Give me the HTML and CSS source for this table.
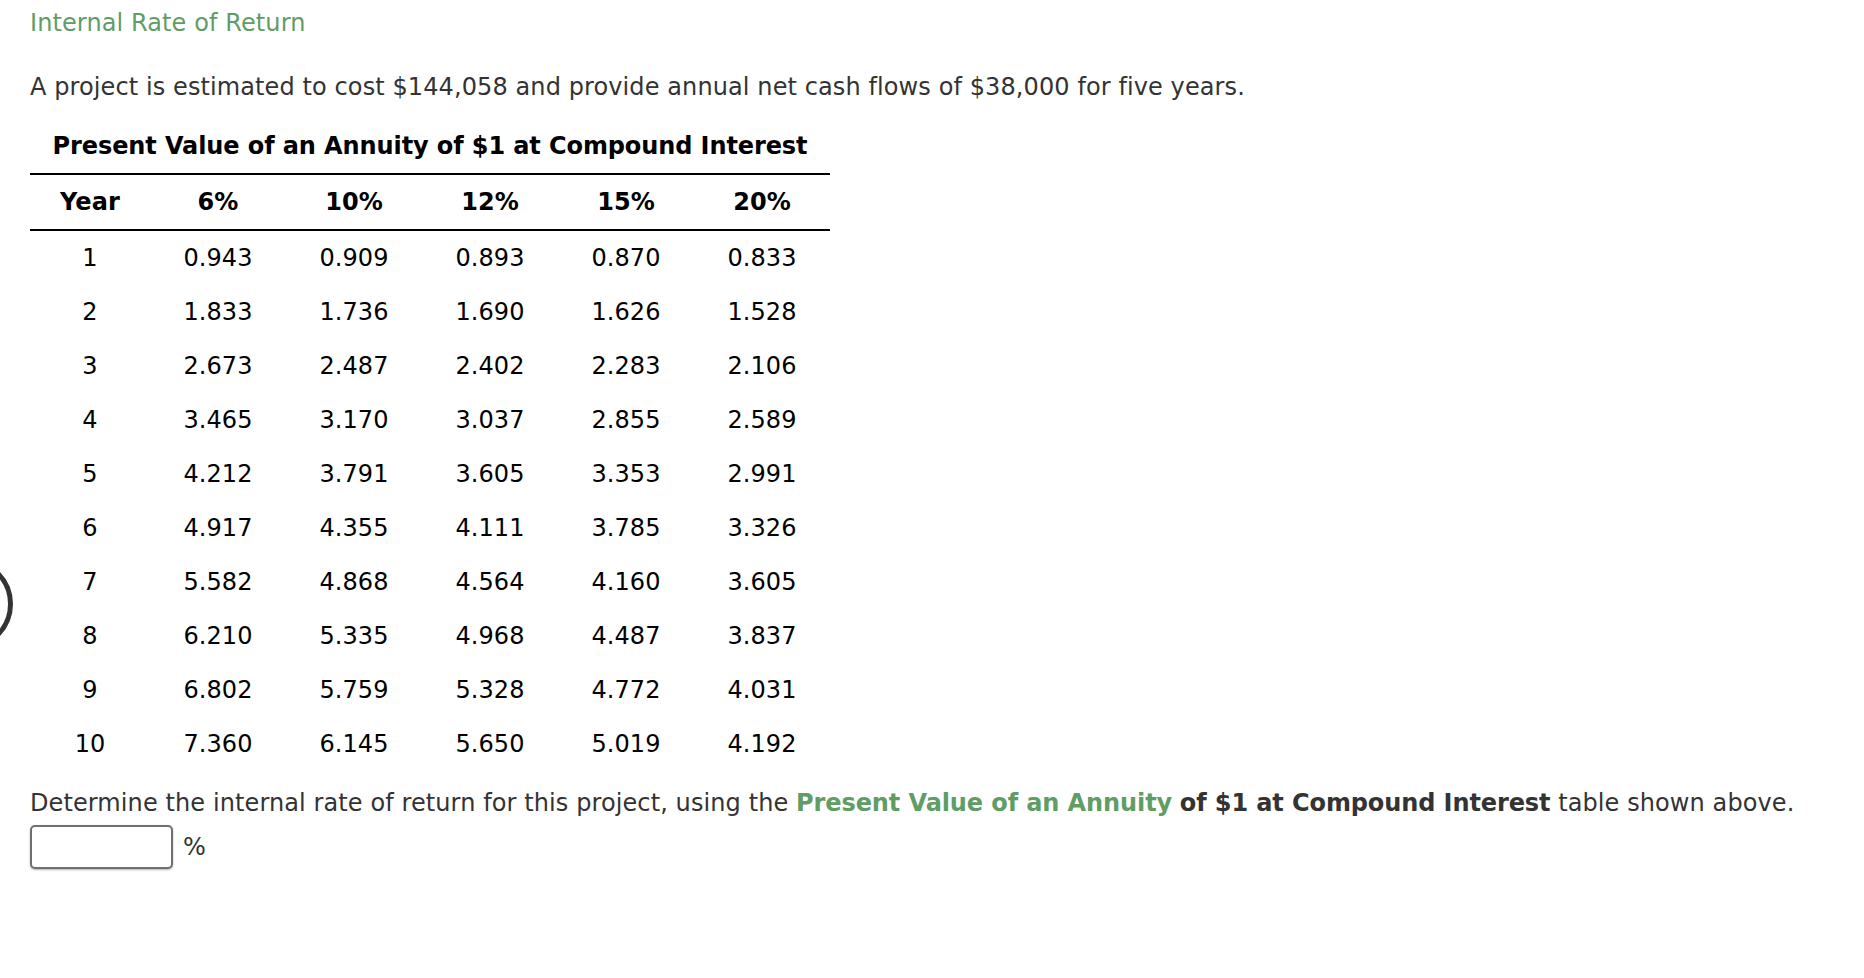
FILE: index.html
```html
<!DOCTYPE html>
<html>
<head>
<meta charset="utf-8">
<link rel="stylesheet" href="styles.css">
</head>
<body>
<div class="ring"></div>
<div class="page">
  <div class="title">Internal Rate of Return</div>
  <p class="intro">A project is estimated to cost $144,058 and provide annual net cash flows of $38,000 for five years.</p>
  <table class="pv">
    <caption>Present Value of an Annuity of $1 at Compound Interest</caption>
    <thead>
      <tr><th class="yr">Year</th><th>6%</th><th>10%</th><th>12%</th><th>15%</th><th>20%</th></tr>
    </thead>
    <tbody>
      <tr><td>1</td><td>0.943</td><td>0.909</td><td>0.893</td><td>0.870</td><td>0.833</td></tr>
      <tr><td>2</td><td>1.833</td><td>1.736</td><td>1.690</td><td>1.626</td><td>1.528</td></tr>
      <tr><td>3</td><td>2.673</td><td>2.487</td><td>2.402</td><td>2.283</td><td>2.106</td></tr>
      <tr><td>4</td><td>3.465</td><td>3.170</td><td>3.037</td><td>2.855</td><td>2.589</td></tr>
      <tr><td>5</td><td>4.212</td><td>3.791</td><td>3.605</td><td>3.353</td><td>2.991</td></tr>
      <tr><td>6</td><td>4.917</td><td>4.355</td><td>4.111</td><td>3.785</td><td>3.326</td></tr>
      <tr><td>7</td><td>5.582</td><td>4.868</td><td>4.564</td><td>4.160</td><td>3.605</td></tr>
      <tr><td>8</td><td>6.210</td><td>5.335</td><td>4.968</td><td>4.487</td><td>3.837</td></tr>
      <tr><td>9</td><td>6.802</td><td>5.759</td><td>5.328</td><td>4.772</td><td>4.031</td></tr>
      <tr><td>10</td><td>7.360</td><td>6.145</td><td>5.650</td><td>5.019</td><td>4.192</td></tr>
    </tbody>
  </table>
  <p class="question">Determine the internal rate of return for this project, using the <b class="green">Present Value of an Annuity</b> <b>of $1 at Compound Interest</b> table shown above.</p>
  <div class="answer">
    <input class="box" type="text">
    <span class="unit">%</span>
  </div>
</div>
</body>
</html>
```

FILE: styles.css
```css
html, body {
  margin: 0;
  padding: 0;
  background: #fff;
}
body {
  font-family: "DejaVu Sans", Verdana, sans-serif;
  font-size: 24px;
  line-height: 28px;
  letter-spacing: 0.1px;
  color: #333;
  position: relative;
  min-height: 978px;
  overflow: hidden;
}
b {
  letter-spacing: -0.1px;
}
.ring {
  position: absolute;
  left: -79px;
  top: 558px;
  width: 92px;
  height: 92px;
  box-sizing: border-box;
  border: 5px solid #333;
  border-radius: 50%;
}
.page {
  padding: 9px 0 0 30px;
}
.title {
  color: #5f9d65;
  height: 28px;
}
.intro {
  margin: 36px 0 0 0;
}
.pv {
  margin-top: 31px;
  border-collapse: collapse;
  width: 800px;
  color: #000;
}
.pv caption {
  font-weight: bold;
  letter-spacing: -0.1px;
  text-align: center;
  padding-bottom: 13px;
  line-height: 28px;
}
.pv th {
  font-weight: bold;
  height: 54px;
  padding: 0;
  border-top: 2px solid #000;
  border-bottom: 2px solid #000;
  width: 136px;
  text-align: center;
}
.pv th.yr {
  width: 120px;
}
.pv td {
  height: 54px;
  padding: 0;
  text-align: center;
}
.question {
  margin: 18px 0 0 0;
}
.green {
  color: #5f9d65;
}
.answer {
  margin-top: 8px;
  display: flex;
  align-items: center;
  gap: 10px;
}
.box {
  width: 143px;
  height: 44px;
  box-sizing: border-box;
  margin: 0;
  border: 2px solid #707070;
  border-radius: 5px;
  box-shadow: 0 1px 2px rgba(0,0,0,0.3);
  background: #fff;
  font-size: 20px;
}
.unit {
  color: #333;
}
```
